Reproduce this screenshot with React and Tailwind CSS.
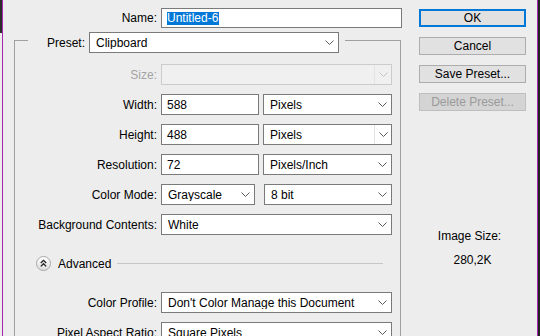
import React from 'react';

const Chevron = ({ color = '#5a5a5a' }) => (
  <svg width="9" height="5" viewBox="0 0 9 5" className="block">
    <path d="M0.5 0.5 L4.5 4.5 L8.5 0.5" stroke={color} strokeWidth="1" fill="none" />
  </svg>
);

const Select = ({ value, width, disabled = false, divider = false }) => (
  <div
    className={`flex items-center h-[21px] border ${disabled ? 'border-[#cccccc] bg-[#f0f0f0]' : 'border-[#7a7a7a] bg-white'}`}
    style={{ width }}
  >
    <span className="flex-1 pl-[6px] truncate leading-none">{value}</span>
    <div className={`w-[17px] h-full flex items-center justify-center ${divider ? 'border-l border-[#e3e3e3]' : ''}`}>
      <Chevron color={disabled ? '#c4c4c4' : '#5a5a5a'} />
    </div>
  </div>
);

const Input = ({ value, width }) => (
  <div className="flex items-center h-[21px] border border-[#7a7a7a] bg-white pl-[5px]" style={{ width }}>
    <span className="leading-none">{value}</span>
  </div>
);

const Row = ({ label, disabled = false, children }) => (
  <div className="flex items-center h-[21px] gap-[4px]">
    <div className={`w-[142px] text-right whitespace-nowrap ${disabled ? 'text-[#a3a3a3]' : ''}`}>{label}</div>
    {children}
  </div>
);

const Button = ({ children, primary = false, disabled = false }) => (
  <div
    className={`h-[18px] flex items-center justify-center ${
      primary
        ? 'border-2 border-[#0078d7] bg-[#e1e1e1]'
        : disabled
        ? 'border border-[#bfbfbf] bg-[#d4d4d4] text-[#9a9a9a]'
        : 'border border-[#adadad] bg-[#e1e1e1]'
    }`}
  >
    {children}
  </div>
);

const AdvancedIcon = () => (
  <svg width="15" height="15" viewBox="0 0 15 15" className="block">
    <defs>
      <linearGradient id="adv" x1="0" y1="0" x2="0" y2="1">
        <stop offset="0" stopColor="#ffffff" />
        <stop offset="1" stopColor="#dcdcdc" />
      </linearGradient>
    </defs>
    <circle cx="7.5" cy="7.5" r="7" fill="url(#adv)" stroke="#a8a8a8" strokeWidth="1" />
    <path d="M4.8 7 L7.5 4.3 L10.2 7" stroke="#222" strokeWidth="1.3" fill="none" />
    <path d="M4.8 10.4 L7.5 7.7 L10.2 10.4" stroke="#222" strokeWidth="1.3" fill="none" />
  </svg>
);

export default function App() {
  return (
    <div
      className="w-[540px] h-[336px] overflow-hidden flex bg-[#ededed] text-[12px] text-black"
      style={{ fontFamily: '"Liberation Sans", Arial, sans-serif' }}
    >
      {/* left window edge */}
      <div className="w-[2px] flex flex-col">
        <div className="h-[33px] bg-[#2b2b2b]" />
      </div>
      <div className="w-px bg-[#a626b0]" />

      <div className="flex-1 flex">
        {/* form column */}
        <div className="w-[400px] pt-[8px] flex flex-col">
          <div className="flex items-center h-[20px] gap-[4px]">
            <div className="w-[154px] text-right">Name:</div>
            <div className="flex items-center h-[20px] w-[241px] border border-[#7a7a7a] bg-white pl-[5px]">
              <span className="bg-[#0078d7] text-white leading-[13px] pr-px">Untitled-6</span>
            </div>
          </div>

          <div className="ml-[11px] w-[387px] mt-[4px] flex flex-col">
            {/* group box top with Preset legend */}
            <div className="flex items-start h-[24px]">
              <div className="w-[14px] h-[16px] mt-[8px] border-l border-t border-[#a0a0a0]" />
              <div className="flex items-center gap-[4px] pr-[6px]">
                <div className="w-[57px] text-right">Preset:</div>
                <Select value="Clipboard" width={250} />
              </div>
              <div className="flex-1 h-[16px] mt-[8px] border-t border-r border-[#a0a0a0]" />
            </div>

            {/* group box body */}
            <div className="border-l border-r border-[#a0a0a0] pt-[8px] pb-[20px] flex flex-col gap-[9px]">
              <Row label="Size:" disabled>
                <Select value="" width={231} disabled divider />
              </Row>
              <Row label="Width:">
                <Input value="588" width={98} />
                <Select value="Pixels" width={129} />
              </Row>
              <Row label="Height:">
                <Input value="488" width={98} />
                <Select value="Pixels" width={129} divider />
              </Row>
              <Row label="Resolution:">
                <Input value="72" width={98} />
                <Select value="Pixels/Inch" width={129} />
              </Row>
              <Row label="Color Mode:">
                <Select value="Grayscale" width={94} />
                <div className="w-px" />
                <Select value="8 bit" width={128} />
              </Row>
              <Row label="Background Contents:">
                <Select value="White" width={231} />
              </Row>

              <div className="flex items-center h-[15px] mt-[12px] pl-[21px]">
                <AdvancedIcon />
                <span className="ml-[7px]">Advanced</span>
                <div className="ml-[6px] w-[266px] h-px bg-[#c6c6c6]" />
              </div>

              <div className="mt-[12px]">
                <Row label="Color Profile:">
                  <Select value="Don't Color Manage this Document" width={231} />
                </Row>
              </div>
              <Row label="Pixel Aspect Ratio:">
                <Select value="Square Pixels" width={231} />
              </Row>
            </div>
          </div>
        </div>

        {/* buttons column */}
        <div className="ml-[16px] w-[107px] pt-[9px] flex flex-col">
          <div className="flex flex-col gap-[10px]">
            <Button primary>OK</Button>
            <Button>Cancel</Button>
            <Button>Save Preset...</Button>
            <Button disabled>Delete Preset...</Button>
          </div>
          <div className="mt-[118px] flex flex-col items-center">
            <div className="h-[14px] leading-[14px] -ml-[6px]">Image Size:</div>
            <div className="mt-[10px] h-[14px] leading-[14px]">280,2K</div>
          </div>
        </div>
        <div className="flex-1" />
      </div>

      {/* right window edge */}
      <div className="w-px bg-[#a626b0]" />
      <div className="w-[2px] bg-[#222222]" />
    </div>
  );
}
